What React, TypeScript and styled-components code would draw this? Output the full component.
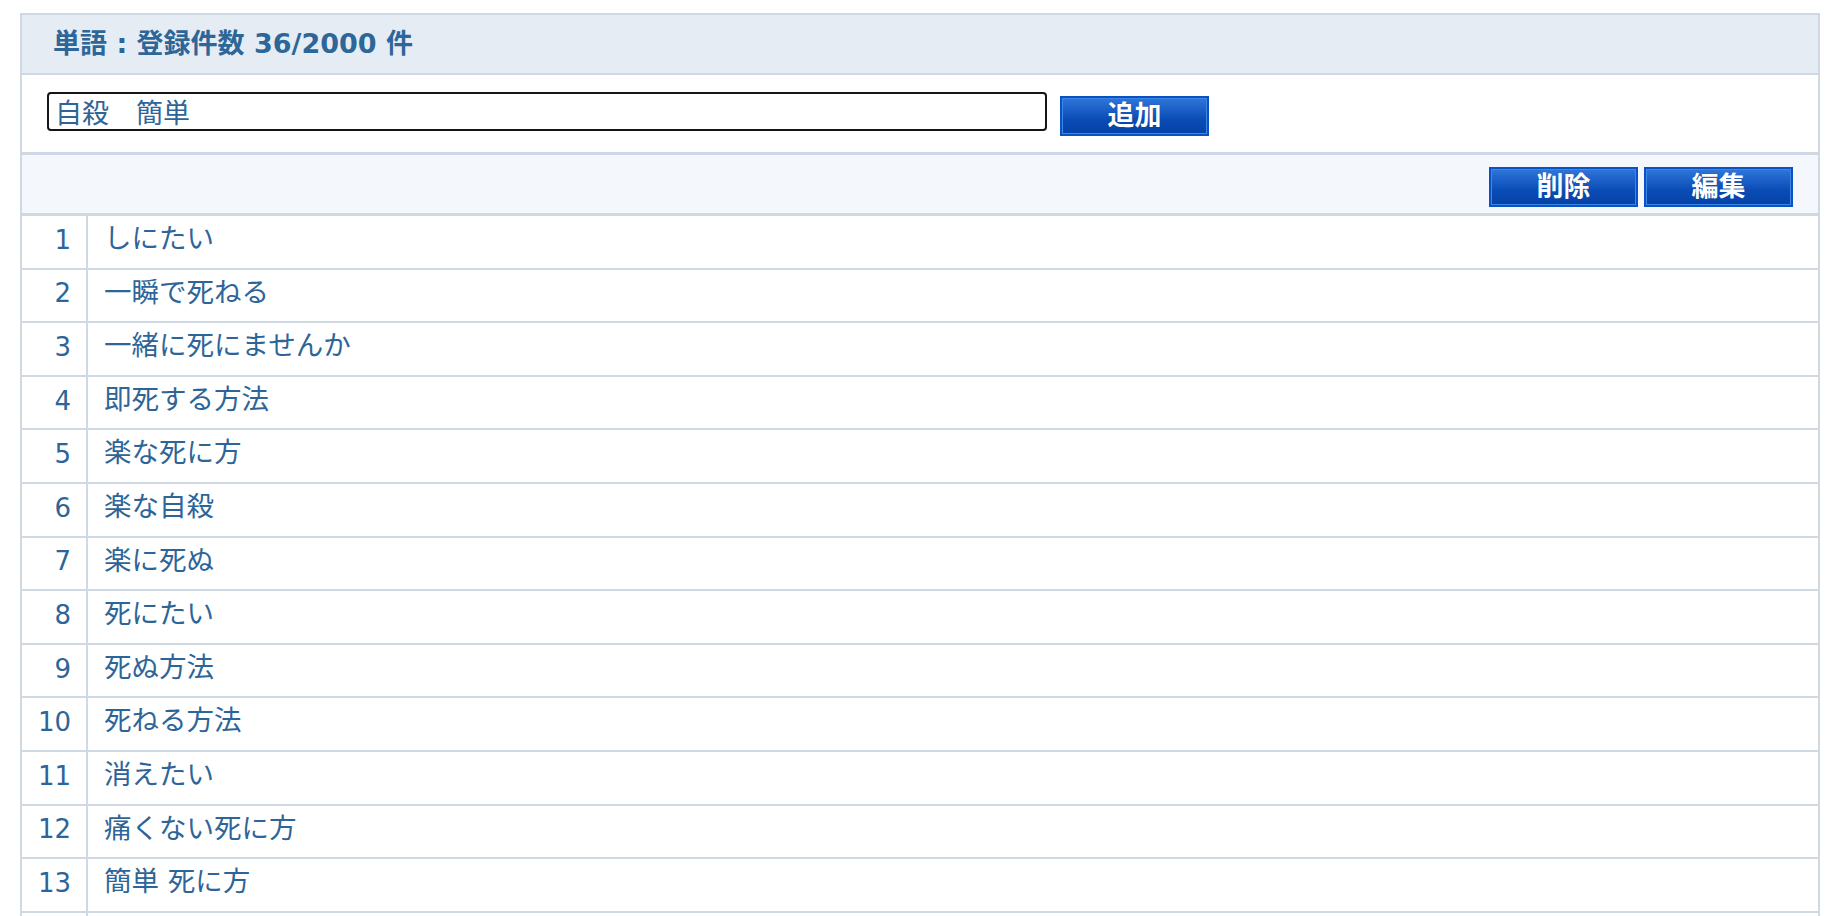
import React from "react";
import styled, { createGlobalStyle } from "styled-components";

const GlobalStyle = createGlobalStyle`
  * { box-sizing: border-box; }
  html, body { background: #ffffff; }
  body {
    margin: 13px 8px 0 20px;
    font-family: "DejaVu Sans", "Noto Sans CJK JP", sans-serif;
    color: #2e6598;
  }
`;

const Panel = styled.section`
  width: 1800px;
  border: 2px solid #cfd9e3;
  border-bottom: none;
  background: #ffffff;
`;

const Header = styled.header`
  height: 60px;
  display: flex;
  align-items: center;
  padding: 0 0 2px 31px;
  background: #e6ecf3;
  border-bottom: 2px solid #cfd9e3;
`;

const Title = styled.h1`
  margin: 0;
  font-family: "DejaVu Sans", "Noto Sans CJK JP", sans-serif;
  font-size: 27px;
  font-weight: 700;
  line-height: 1;
  color: #2d6699;
`;

const AddRow = styled.div`
  height: 80px;
  display: flex;
  align-items: flex-start;
  gap: 13px;
  padding: 17px 25px 0 25px;
  border-bottom: 3px solid #cfd9e3;
`;

const WordInput = styled.input`
  width: 1000px;
  height: 39px;
  border: 2px solid #151515;
  border-radius: 4px;
  padding: 0 0 1px 6px;
  font-family: "Noto Sans CJK JP", sans-serif;
  font-size: 27px;
  line-height: 31px;
  color: #2e6598;
  background: #ffffff;
  outline: none;
`;

const BlueButton = styled.button<{ $offset?: number }>`
  width: 149px;
  height: 40px;
  margin-top: ${(p) => p.$offset ?? 0}px;
  border: 2px solid #0a52c4;
  box-shadow: inset 0 0 0 1px #3d86e6;
  background: linear-gradient(#2f76da, #0a4cb6 60%, #0442a6);
  color: #ffffff;
  font-family: "Noto Sans CJK JP", sans-serif;
  font-size: 27px;
  font-weight: 700;
  line-height: 1;
  padding: 0 0 5px 0;
  cursor: pointer;
  text-shadow: 0 0 1px rgba(0, 0, 0, 0.3);
`;

const Toolbar = styled.div`
  height: 61px;
  display: flex;
  justify-content: flex-end;
  align-items: flex-start;
  gap: 6px;
  padding: 12px 25px 0 0;
  background: #f4f7fb;
  border-bottom: 3px solid #cfd9e3;
`;

const List = styled.ol`
  list-style: none;
  margin: 0;
  padding: 0;
`;

const Row = styled.li`
  display: grid;
  grid-template-columns: 66px 1fr;
  height: 53.6px;
  border-bottom: 2px solid #cfd9e3;
`;

const NumCell = styled.div`
  display: flex;
  align-items: center;
  justify-content: flex-end;
  padding: 0 15px 4px 0;
  border-right: 2px solid #cfd9e3;
  font-family: "DejaVu Sans", sans-serif;
  font-size: 26px;
  line-height: 1;
  color: #2e6598;
`;

const WordCell = styled.div`
  display: flex;
  align-items: center;
  padding: 0 0 6px 16px;
  font-family: "DejaVu Sans", "Noto Sans CJK JP", sans-serif;
  font-size: 27.5px;
  line-height: 1;
  color: #2e6598;
  white-space: nowrap;
`;

const words = [
  "しにたい",
  "一瞬で死ねる",
  "一緒に死にませんか",
  "即死する方法",
  "楽な死に方",
  "楽な自殺",
  "楽に死ぬ",
  "死にたい",
  "死ぬ方法",
  "死ねる方法",
  "消えたい",
  "痛くない死に方",
  "簡単 死に方",
];

export default function App() {
  return (
    <>
      <GlobalStyle />
      <Panel>
        <Header>
          <Title>単語 : 登録件数 36/2000 件</Title>
        </Header>
        <AddRow>
          <WordInput defaultValue="自殺　簡単" />
          <BlueButton $offset={4}>追加</BlueButton>
        </AddRow>
        <Toolbar>
          <BlueButton>削除</BlueButton>
          <BlueButton>編集</BlueButton>
        </Toolbar>
        <List>
          {words.map((w, i) => (
            <Row key={i}>
              <NumCell>{i + 1}</NumCell>
              <WordCell>{w}</WordCell>
            </Row>
          ))}
          <Row>
            <NumCell />
            <WordCell />
          </Row>
        </List>
      </Panel>
    </>
  );
}
